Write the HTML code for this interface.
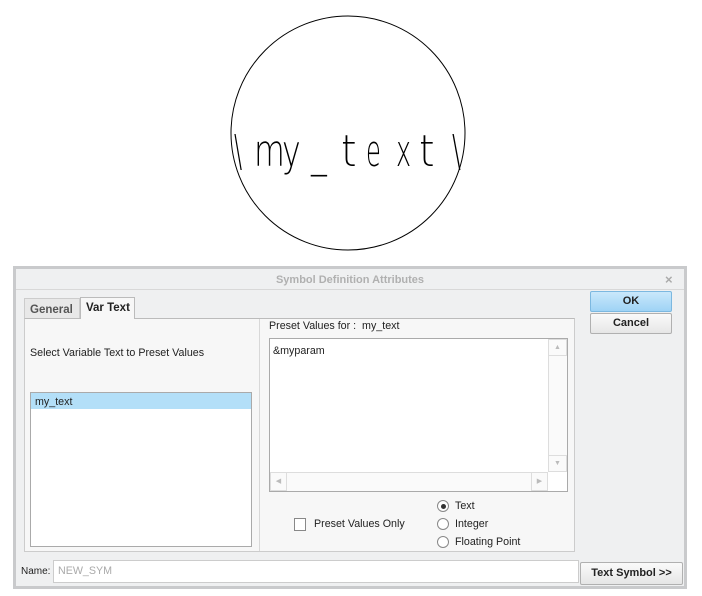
<!DOCTYPE html>
<html><head><style>
body{margin:0;width:702px;height:596px;background:#fff;position:relative;font-family:"Liberation Sans",sans-serif;font-size:10.7px;color:#222;overflow:hidden}
.a{position:absolute;box-sizing:border-box}
.btn{border:1px solid #b0b0b0;border-radius:2px;background:linear-gradient(#fafafa,#e6e6e6);text-align:center;font-weight:bold;font-size:11px;line-height:18px}
.radio{width:12px;height:12px;border:1px solid #888;border-radius:50%;background:#fff}
</style></head><body>
<svg class="a" style="left:0;top:0" width="702" height="260">
<circle cx="348" cy="133" r="117" fill="none" stroke="#000" stroke-width="1"/>
<g font-family="DejaVu Sans" font-weight="200" font-size="44" fill="#000">
<text x="234" y="166" transform="translate(234 0) scale(0.55 1) translate(-234 0)">\</text>
<text x="254" y="166" transform="translate(254 0) scale(0.72 1) translate(-254 0)">m</text>
<text x="282" y="166" transform="translate(282 0) scale(0.72 1) translate(-282 0)">y</text>
<text x="311" y="166" transform="translate(311 0) scale(0.72 1) translate(-311 0)">_</text>
<text x="341" y="166" transform="translate(341 0) scale(0.9 1) translate(-341 0)">t</text>
<text x="366" y="166" transform="translate(366 0) scale(0.55 1) translate(-366 0)">e</text>
<text x="396" y="166" transform="translate(396 0) scale(0.58 1) translate(-396 0)">x</text>
<text x="419" y="166" transform="translate(419 0) scale(0.9 1) translate(-419 0)">t</text>
<text x="452" y="166" transform="translate(452 0) scale(0.6 1) translate(-452 0)">\</text>
</g></svg>

<div class="a" style="left:13px;top:266px;width:674px;height:323px;border:3px solid #c9cacc;background:#eff0f1"></div>
<div class="a" style="left:16px;top:269px;width:668px;height:21px;border-bottom:1px solid #d8d8d8;text-align:center;line-height:22px;color:#b0b0b0;font-weight:bold;font-size:11px">Symbol Definition Attributes</div>
<div class="a" style="left:665px;top:272px;color:#aaa;font-size:13px;font-weight:bold">×</div>

<div class="a" style="left:24px;top:298px;width:56px;height:21px;border:1px solid #ccc;border-bottom:none;background:#e8e8e8;color:#555;font-weight:bold;font-size:11.5px;line-height:22px;padding-left:5px">General</div>
<div class="a" style="left:80px;top:297px;width:55px;height:22px;border:1px solid #bbb;border-bottom:none;background:#f7f7f7;font-weight:bold;font-size:11.5px;line-height:21px;padding-left:5px">Var Text</div>
<div class="a" style="left:24px;top:318px;width:551px;height:234px;border:1px solid #ccc;border-top:1px solid #bbb;background:#f7f7f7"></div>
<div class="a" style="left:81px;top:318px;width:53px;height:2px;background:#f7f7f7"></div>
<div class="a" style="left:259px;top:319px;width:1px;height:232px;background:#d8d8d8"></div>
<div class="a" style="left:30px;top:347px">Select Variable Text to Preset Values</div>
<div class="a" style="left:30px;top:392px;width:222px;height:155px;border:1px solid #aaa;background:#fff"></div>
<div class="a" style="left:31px;top:393px;width:220px;height:16px;background:#b3dff8;padding-left:4px;line-height:18px">my_text</div>

<div class="a" style="left:269px;top:320px">Preset Values for :&nbsp; my_text</div>
<div class="a" style="left:269px;top:338px;width:299px;height:154px;border:1px solid #aaa;background:#fff"></div>
<div class="a" style="left:273px;top:345px">&amp;myparam</div>
<div class="a" style="left:548px;top:339px;width:19px;height:133px;border-left:1px solid #ddd;background:#fafafa"></div>
<div class="a" style="left:548px;top:339px;width:19px;height:17px;border:1px solid #ddd;color:#bbb;font-size:7px;text-align:center;line-height:15px">▲</div>
<div class="a" style="left:548px;top:455px;width:19px;height:17px;border:1px solid #ddd;color:#bbb;font-size:7px;text-align:center;line-height:15px">▼</div>
<div class="a" style="left:270px;top:472px;width:278px;height:19px;border-top:1px solid #ddd;background:#fafafa"></div>
<div class="a" style="left:270px;top:472px;width:17px;height:19px;border:1px solid #ddd;color:#bbb;font-size:7px;text-align:center;line-height:17px">◀</div>
<div class="a" style="left:531px;top:472px;width:17px;height:19px;border:1px solid #ddd;color:#bbb;font-size:7px;text-align:center;line-height:17px">▶</div>

<div class="a" style="left:294px;top:518px;width:12px;height:13px;border:1px solid #888;background:#fff"></div>
<div class="a" style="left:314px;top:518px">Preset Values Only</div>
<div class="a radio" style="left:437px;top:500px"></div>
<div class="a" style="left:441px;top:504px;width:5px;height:5px;border-radius:50%;background:#333"></div>
<div class="a" style="left:455px;top:500px">Text</div>
<div class="a radio" style="left:437px;top:518px"></div>
<div class="a" style="left:455px;top:518px">Integer</div>
<div class="a radio" style="left:437px;top:536px"></div>
<div class="a" style="left:455px;top:536px">Floating Point</div>

<div class="a btn" style="left:590px;top:291px;width:82px;height:21px;border-color:#7cb8e0;background:linear-gradient(#c9e8fb,#9fd3f5)">OK</div>
<div class="a btn" style="left:590px;top:313px;width:82px;height:21px">Cancel</div>

<div class="a" style="left:21px;top:566px;font-size:10px">Name:</div>
<div class="a" style="left:53px;top:560px;width:526px;height:23px;border:1px solid #ccc;background:#fff;color:#aaa;padding-left:4px;line-height:21px">NEW_SYM</div>
<div class="a btn" style="left:580px;top:562px;width:103px;height:23px;line-height:21px">Text Symbol &gt;&gt;</div>
</body></html>
